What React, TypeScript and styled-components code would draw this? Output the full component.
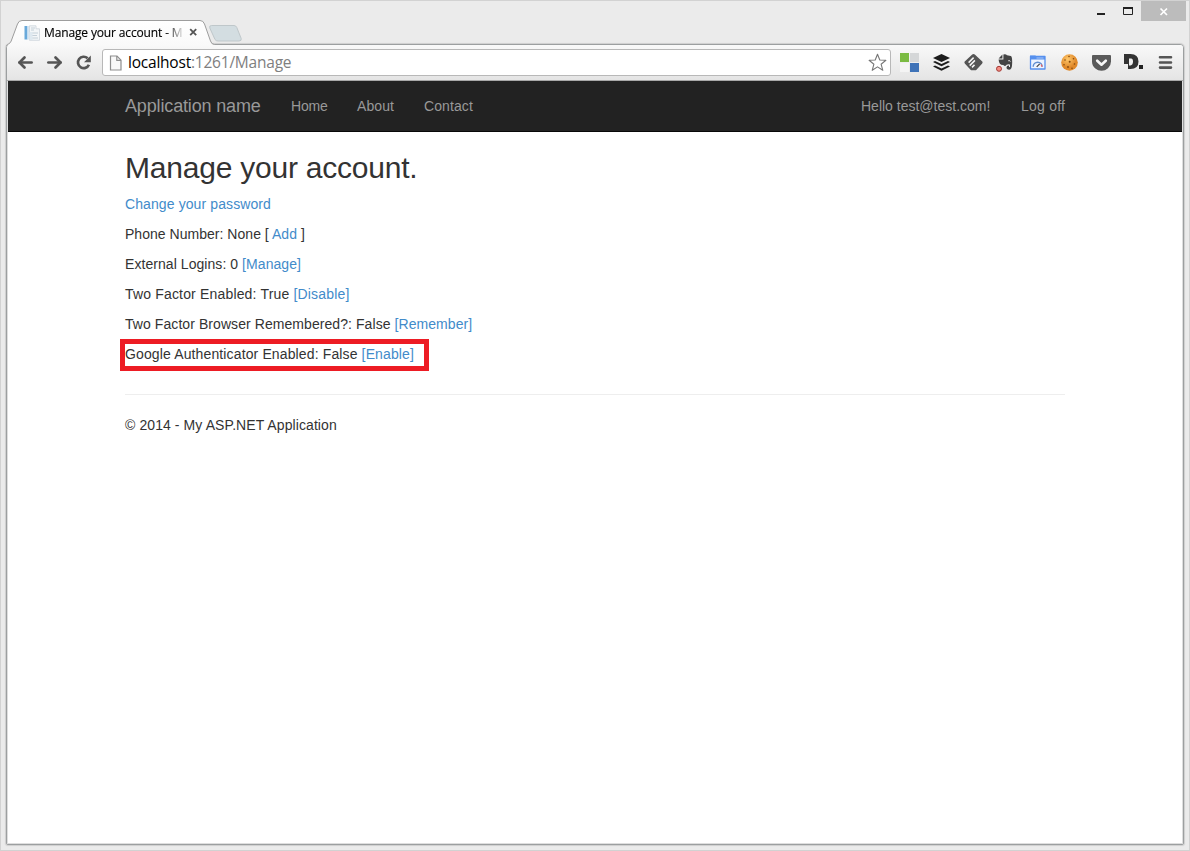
import React from "react";
import styled, { createGlobalStyle } from "styled-components";

const GlobalStyle = createGlobalStyle`
  * { box-sizing: border-box; }
  body { margin: 0; background: #ebebeb; }
`;

const uiFont = `"Segoe UI", "Open Sans", "Noto Sans", sans-serif`;
const pageFont = `"Liberation Sans", Arial, sans-serif`;

const Window = styled.div`
  width: 1190px;
  height: 851px;
  display: flex;
  flex-direction: column;
  background: #ebebeb;
  border: 1px solid #d2d2d2;
  padding: 0 5px 5px;
`;

const TitleBar = styled.header`
  height: 43px;
  flex: none;
  display: flex;
  justify-content: space-between;
  align-items: flex-start;
  margin-right: -2px;
`;

const TabStrip = styled.div`
  display: flex;
  align-items: flex-start;
  height: 45px;
  position: relative;
  z-index: 1;
`;

const Tab = styled.div`
  position: relative;
  width: 208px;
  height: 45px;
  display: flex;
  align-items: center;
  padding: 19px 0 1px 18px;
`;

const TabShape = styled.svg`
  position: absolute;
  left: 0;
  top: 0;
`;

const Favicon = styled.svg`
  position: relative;
  flex: none;
`;

const TabTitle = styled.span`
  position: relative;
  width: 138px;
  margin-left: 4px;
  white-space: nowrap;
  font: 12px/18px ${uiFont};
  letter-spacing: -0.14px;
  color: #000;
  -webkit-text-stroke: 0.15px #000;
  mask-image: linear-gradient(to right, #000 122px, transparent 141px);
`;

const TabClose = styled.svg`
  position: relative;
  flex: none;
  margin-left: 7px;
`;

const NewTab = styled.svg`
  flex: none;
  margin: 23px 0 0 -7px;
`;

const WindowButtons = styled.div`
  display: flex;
  height: 20px;
`;

const WindowButton = styled.div<{ $width: number; $close?: boolean }>`
  width: ${(p) => p.$width}px;
  height: 20px;
  background: ${(p) => (p.$close ? "#bcbcbc" : "transparent")};
  display: flex;
`;

const Frame = styled.div`
  flex: 1;
  min-height: 0;
  display: flex;
  flex-direction: column;
  border: 1px solid #9c9fa0;
  border-radius: 4px 4px 2px 2px;
  box-shadow: 0 0 1px 1px #cfcfcf;
  background: #fff;
  overflow: hidden;
`;

const Toolbar = styled.div`
  height: 36px;
  flex: none;
  display: flex;
  align-items: center;
  background: linear-gradient(#f9f9f9, #e4e4e4);
  border-bottom: 1px solid #a9a9a9;
  padding: 0 9px 0 10px;
`;

const NavIcons = styled.div`
  display: flex;
  gap: 11px;
  width: 85px;
  flex: none;
`;

const AddressBar = styled.div`
  width: 789px;
  height: 27px;
  flex: none;
  display: flex;
  align-items: center;
  background: #fff;
  border: 1px solid #b8b8b8;
  border-radius: 3px;
  padding: 0 2px 0 6px;
`;

const Url = styled.span`
  flex: 1;
  margin-left: 5px;
  font: 15.5px/23px ${uiFont};
  color: #808080;
  letter-spacing: -0.22px;
`;

const Host = styled.span`
  color: #000;
`;

const Extensions = styled.div`
  display: flex;
  gap: 13px;
  margin-left: 9px;
`;

const Page = styled.div`
  flex: 1;
  border: 1px solid #dedede;
  border-top: 0;
`;

const Navbar = styled.nav`
  height: 51px;
  background: #222;
  border-bottom: 1px solid #080808;
  padding: 0 117px;
  display: flex;
  align-items: center;
  color: #999;
  font: 14px/20px ${pageFont};
`;

const Brand = styled.a`
  font-size: 18px;
  width: 136px;
  margin-right: 30px;
  white-space: nowrap;
  letter-spacing: -0.15px;
`;

const NavItem = styled.a<{ $width: number; $spacing?: number }>`
  width: ${(p) => p.$width}px;
  margin-right: 30px;
  white-space: nowrap;
  letter-spacing: ${(p) => p.$spacing ?? 0}px;
`;

const NavRight = styled.div`
  display: flex;
  gap: 30px;
  margin-left: auto;

  ${NavItem} {
    margin-right: 0;
  }
`;

const Content = styled.main`
  padding: 19px 117px 0;
  color: #333;
  font: 14px/20px ${pageFont};
`;

const Heading = styled.h2`
  margin: 0 0 10px;
  font-size: 30px;
  font-weight: 400;
  line-height: 33px;
  letter-spacing: -0.22px;
`;

const Row = styled.p<{ $spacing?: number }>`
  margin: 0 0 10px;
  white-space: pre;
  letter-spacing: ${(p) => p.$spacing ?? 0}px;
`;

const Link = styled.a`
  color: #428bca;
`;

const Highlighted = styled(Row)`
  width: 309px;
  height: 32px;
  margin: -5px 0 23px -5px;
  border: 5px solid #ed1c24;
  line-height: 20px;
`;

const Rule = styled.hr`
  margin: 0 0 20px;
  border: 0;
  border-top: 1px solid #eee;
`;

const ArrowIcon = ({ flip = false }: { flip?: boolean }) => (
  <svg width="18" height="18" viewBox="0 0 18 18">
    <g transform={flip ? "translate(17 0) scale(-1 1)" : undefined} fill="none" stroke="#555" strokeWidth="2.7">
      <path d="M2.500 8.500H14.600" strokeLinecap="round" />
      <path d="M7.500 3.500L2.500 8.500L7.500 13.500" strokeLinecap="round" strokeLinejoin="round" />
    </g>
  </svg>
);

const ReloadIcon = () => (
  <svg width="18" height="18" viewBox="0 0 18 18">
    <path d="M12.600 4.300A5.700 5.700 0 1 0 13.900 10.700" fill="none" stroke="#555" strokeWidth="2.700" />
    <path d="M15.800 1.500v6.700H9z" fill="#555" />
  </svg>
);

const PageIcon = () => (
  <svg width="14" height="16" viewBox="0 0 14 16">
    <path d="M1.500 1h6.500l4 4.200V15h-10.500z" fill="#f8f8f8" stroke="#8d8d8d" strokeWidth="1.200" />
    <path d="M7.800 1v4.400h4.200" fill="none" stroke="#8d8d8d" strokeWidth="1.200" />
  </svg>
);

const StarIcon = () => (
  <svg width="20" height="19" viewBox="0 0 20 19">
    <path
      d="M9.500 1.200l2.300 5.800 6.100.3-4.800 3.900 1.700 6.100L9.500 13.900l-5.300 3.400 1.700-6.100-4.800-3.900 6.100-.3z"
      fill="#fff" stroke="#777" strokeWidth="1.100" strokeLinejoin="round"
    />
  </svg>
);

const ExtIcon = ({ children }: { children: React.ReactNode }) => (
  <svg width="19" height="19" viewBox="0 0 19 19">{children}</svg>
);

export default function App() {
  return (
    <>
      <GlobalStyle />
      <Window>
        <TitleBar>
          <TabStrip>
            <Tab>
              <TabShape width="210" height="45" viewBox="0 0 210 45">
                <defs>
                  <linearGradient id="tabFill" x1="0" y1="0" x2="0" y2="1">
                    <stop offset="0" stopColor="#fff" />
                    <stop offset="1" stopColor="#f9f9f9" />
                  </linearGradient>
                </defs>
                <path
                  d="M1.500 45V43.500Q4 42.500 5.200 40L11.500 23Q12.700 19.500 16 19.500H194Q197.300 19.500 198.500 23L204.500 40Q205.600 43.500 208.500 43.500V45Z"
                  fill="url(#tabFill)"
                />
                <path
                  d="M0.500 45Q1 43.500 2.500 43Q4.500 42 5.200 40L11.500 23Q12.700 19.500 16 19.500H194Q197.300 19.500 198.500 23L204.500 40Q205.600 43.500 208.500 43.500"
                  fill="none" stroke="#9d9d9d"
                />
              </TabShape>
              <Favicon width="16" height="16" viewBox="0 0 16 16">
                <rect x="0.500" y="1" width="3" height="13.500" fill="#69a9da" />
                <rect x="3.500" y="1" width="1.500" height="13.500" fill="#d5e6f3" />
                <path d="M5.500 .800h6.500v3h3.500v11.500h-10z" fill="#f3f6f8" stroke="#cbd3da" strokeWidth=".8" />
                <path d="M7 3h4M7 5h3M8 8h6M8 10.500h5M8 13h6" stroke="#bfccd5" strokeWidth=".9" />
                <path d="M5.500 7h3v8h-3z" fill="#dfe9f0" />
              </Favicon>
              <TabTitle>Manage your account - M</TabTitle>
              <TabClose width="9" height="9" viewBox="0 0 9 9">
                <path d="M1.200 1.200l6 6M7.200 1.200l-6 6" stroke="#555" strokeWidth="1.800" />
              </TabClose>
            </Tab>
            <NewTab width="36" height="20" viewBox="0 0 36 20">
              <path
                d="M4.500 1.500H27Q29 1.500 29.800 3.500L34.200 14.500Q34.800 17 32 17H11Q9 17 8 15.500L2.800 4Q2 1.500 4.500 1.500Z"
                fill="#d3dde1" stroke="#bfc7ca"
              />
            </NewTab>
          </TabStrip>
          <WindowButtons>
            <WindowButton $width={27}>
              <svg width="27" height="20"><path d="M10 13h8" stroke="#222" strokeWidth="2" /></svg>
            </WindowButton>
            <WindowButton $width={27}>
              <svg width="27" height="20">
                <path d="M9.500 7v6.500h9V7z" fill="none" stroke="#222" />
                <path d="M9 7h10" stroke="#222" strokeWidth="2" />
              </svg>
            </WindowButton>
            <WindowButton $width={45} $close>
              <svg width="45" height="20"><path d="M19.500 7.500l6.500 6.500M26 7.500L19.500 14" stroke="#fff" strokeWidth="1.700" /></svg>
            </WindowButton>
          </WindowButtons>
        </TitleBar>
        <Frame>
          <Toolbar>
            <NavIcons>
              <ArrowIcon />
              <ArrowIcon flip />
              <ReloadIcon />
            </NavIcons>
            <AddressBar>
              <PageIcon />
              <Url><Host>localhost</Host>:1261/Manage</Url>
              <StarIcon />
            </AddressBar>
            <Extensions>
              <ExtIcon>
                <path d="M0 0h9v9H0z" fill="#7bbb42" />
                <path d="M10 0h9v9h-9z" fill="#d5d7d8" />
                <path d="M0 10h9v9H0z" fill="#f4f4f4" />
                <path d="M10 10h9v9h-9z" fill="#3f73b8" />
              </ExtIcon>
              <ExtIcon>
                <path d="M9.500 1l8.500 4-8.500 4-8.500-4z" fill="#1c1c1c" />
                <path d="M1 9l2-1 6.500 3L16 8l2 1-8.500 4.200zM1 13.500l2-1 6.500 3 6.500-3 2 1-8.500 4.200z" fill="#1c1c1c" />
              </ExtIcon>
              <ExtIcon>
                <path d="M8.200 1.600Q9.500 .5 10.800 1.600L18 8.300Q19.200 9.500 18 10.700L12 17.300H7L1 10.700Q-.2 9.500 1 8.300z" fill="#555" />
                <path d="M4.600 9.600l5-5M5.700 12.600l5.200-5.200M8 14.400l2.500-2.500" stroke="#f5f5f5" strokeWidth="1.500" />
              </ExtIcon>
              <ExtIcon>
                <path d="M2.600 5.400L6.400 1.600V5.400zM7.400 1.500Q10 1 11 2.300L14.800 2.900Q16.200 3.300 16.200 9.500Q16.200 16.700 13.300 16.700Q10.300 16.700 10.500 14.300Q10.700 12.400 13 12.600V14H14V11.400Q10.500 10.600 9.600 12.800Q8.500 13.200 7.300 12Q3 12.200 2.600 6.400H7.400z" fill="#444" />
                <path d="M12.200 7.800q1.700-1 2.100.9" stroke="#eee" strokeWidth=".9" fill="none" />
                <circle cx="3" cy="15.800" r="2.500" fill="#f58d83" stroke="#a43b37" strokeWidth="1" />
              </ExtIcon>
              <ExtIcon>
                <path d="M2.500 3.500h14.500v12.500H2.500z" fill="#edf4ff" stroke="#5690ee" strokeWidth="1.300" strokeLinejoin="round" />
                <path d="M2 2.500h5.500l1 1.500h8.500v2.500H2z" fill="#5690ee" />
                <path d="M8.500 5h7" stroke="#bfd5fa" strokeWidth=".8" />
                <path d="M5.200 13.800a4.500 4.500 0 0 1 9 0" fill="none" stroke="#608ed0" strokeWidth="1.500" />
                <path d="M8.700 13.800l3-3" stroke="#444" strokeWidth="1.200" />
                <path d="M13.200 11.500l.9 2.300" stroke="#e66" strokeWidth="1.300" />
              </ExtIcon>
              <ExtIcon>
                <defs>
                  <radialGradient id="cookie" cx=".4" cy=".3">
                    <stop offset="0" stopColor="#ffc86b" />
                    <stop offset="1" stopColor="#e0892a" />
                  </radialGradient>
                </defs>
                <circle cx="9.500" cy="9.500" r="8.300" fill="url(#cookie)" />
                <g fill="#83480f">
                  <circle cx="9" cy="3.500" r=".8" /><circle cx="13.500" cy="5.700" r=".8" />
                  <circle cx="5" cy="7" r=".8" /><circle cx="9.700" cy="8.700" r="1" />
                  <circle cx="14.500" cy="11" r=".8" /><circle cx="4" cy="11.800" r=".8" />
                  <circle cx="8" cy="14" r=".9" /><circle cx="12" cy="15.200" r=".8" />
                </g>
              </ExtIcon>
              <ExtIcon>
                <path d="M1 2h17q1 0 1 1v5.500q0 4-3 6.700t-6.500 2.600T3 15.200 0 8.500V3q0-1 1-1z" fill="#5a5a5a" />
                <path d="M5.200 7.700l4.300 4 4.300-4" fill="none" stroke="#f7f7f7" strokeWidth="2.600" strokeLinecap="round" strokeLinejoin="round" />
              </ExtIcon>
              <ExtIcon>
                <path d="M0 1h6.500q8 0 8 7.500T6.500 16H4V11H0zM5 5.500V12.500h1.500q2.500-.5 2.500-4t-2.500-3z" fill="#333" fillRule="evenodd" />
                <path d="M15 12h4v4h-4z" fill="#222" />
              </ExtIcon>
              <ExtIcon>
                <path d="M4 4.300h11M4 9.500h11M4 14.600h11" stroke="#555" strokeWidth="2.600" strokeLinecap="round" />
              </ExtIcon>
            </Extensions>
          </Toolbar>
          <Page>
            <Navbar>
              <Brand>Application name</Brand>
              <NavItem $width={36} $spacing={-0.15}>Home</NavItem>
              <NavItem $width={37} $spacing={0.1}>About</NavItem>
              <NavItem $width={50} $spacing={0.1}>Contact</NavItem>
              <NavRight>
                <NavItem $width={130}>Hello test@test.com!</NavItem>
                <NavItem $width={44} $spacing={0.22}>Log off</NavItem>
              </NavRight>
            </Navbar>
            <Content>
              <Heading>Manage your account.</Heading>
              <Row $spacing={0.1}><Link>Change your password</Link></Row>
              <Row $spacing={0.03}>Phone Number: None [ <Link>Add</Link> ]</Row>
              <Row $spacing={0.06}>External Logins: 0 <Link>[Manage]</Link></Row>
              <Row $spacing={0.17}>Two Factor Enabled: True <Link>[Disable]</Link></Row>
              <Row $spacing={0.07}>Two Factor Browser Remembered?: False <Link>[Remember]</Link></Row>
              <Highlighted $spacing={0.13}>Google Authenticator Enabled: False <Link>[Enable]</Link></Highlighted>
              <Rule />
              <Row $spacing={0.09}>© 2014 - My ASP.NET Application</Row>
            </Content>
          </Page>
        </Frame>
      </Window>
    </>
  );
}
